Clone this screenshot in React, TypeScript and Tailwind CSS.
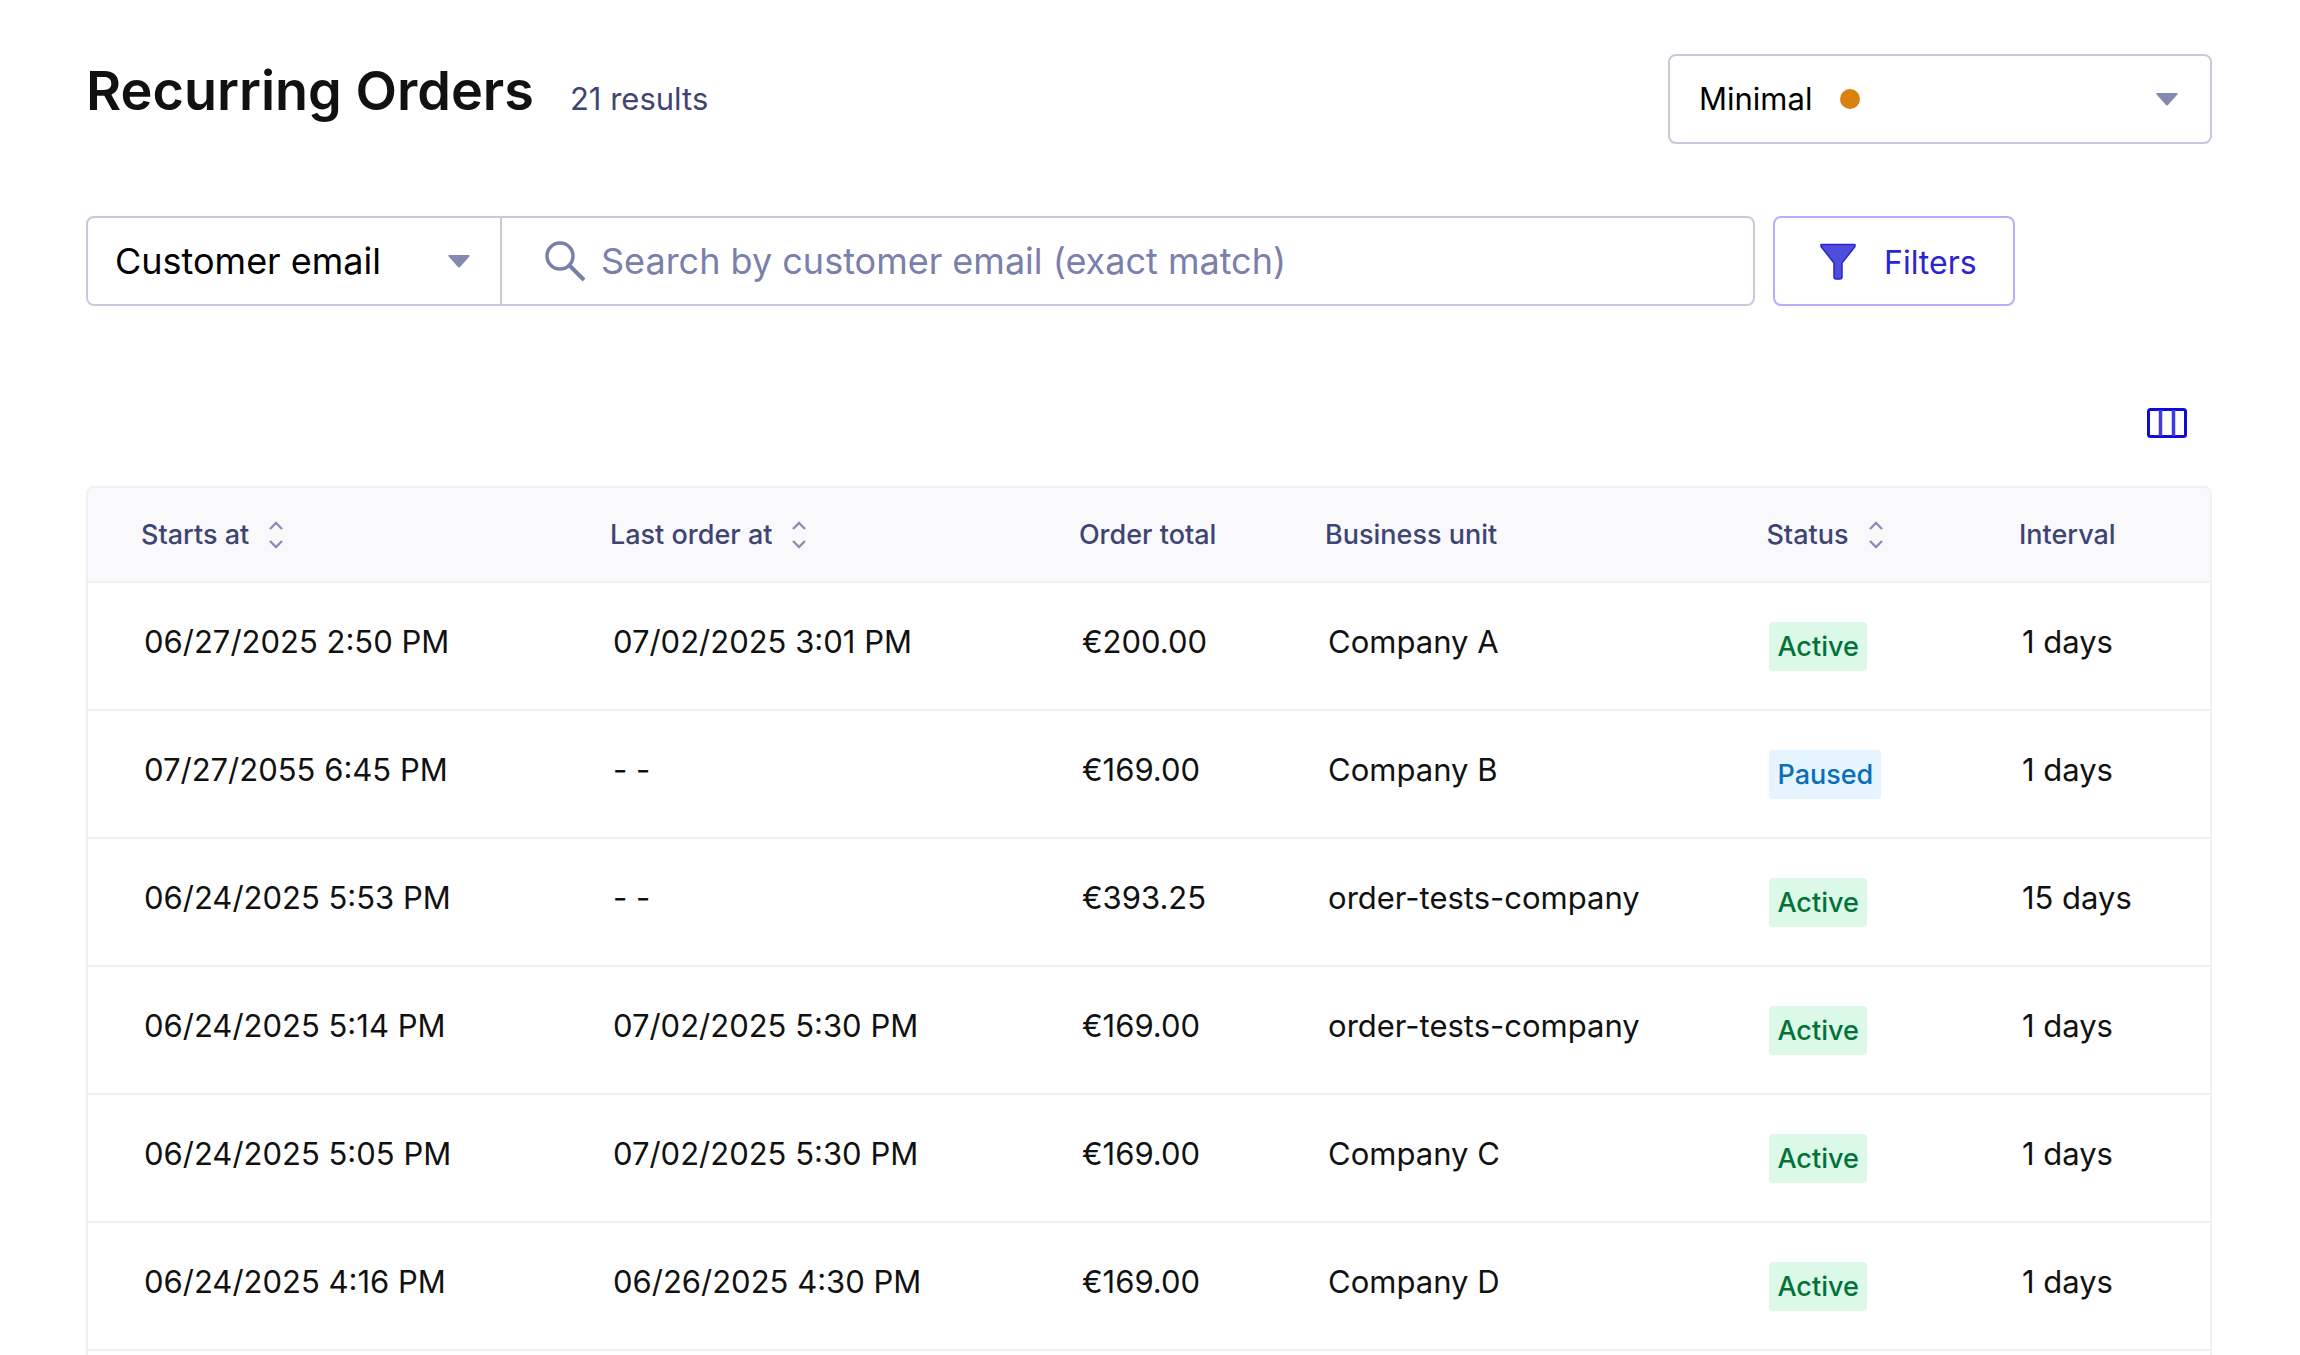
import { useState } from "react";

const columns = [
  { key: "startsAt", label: "Starts at", sortable: true, width: "w-[22.1%]" },
  { key: "lastOrderAt", label: "Last order at", sortable: true, width: "w-[22.1%]" },
  { key: "total", label: "Order total", sortable: false, width: "w-[11.6%]" },
  { key: "unit", label: "Business unit", sortable: false, width: "w-[20.8%]" },
  { key: "status", label: "Status", sortable: true, width: "w-[11.9%]" },
  { key: "interval", label: "Interval", sortable: false, width: "w-[11.5%]" },
];

const orders = [
  { startsAt: "06/27/2025 2:50 PM", lastOrderAt: "07/02/2025 3:01 PM", total: "€200.00", unit: "Company A", status: "Active", interval: "1 days" },
  { startsAt: "07/27/2055 6:45 PM", lastOrderAt: "- -", total: "€169.00", unit: "Company B", status: "Paused", interval: "1 days" },
  { startsAt: "06/24/2025 5:53 PM", lastOrderAt: "- -", total: "€393.25", unit: "order-tests-company", status: "Active", interval: "15 days" },
  { startsAt: "06/24/2025 5:14 PM", lastOrderAt: "07/02/2025 5:30 PM", total: "€169.00", unit: "order-tests-company", status: "Active", interval: "1 days" },
  { startsAt: "06/24/2025 5:05 PM", lastOrderAt: "07/02/2025 5:30 PM", total: "€169.00", unit: "Company C", status: "Active", interval: "1 days" },
  { startsAt: "06/24/2025 4:16 PM", lastOrderAt: "06/26/2025 4:30 PM", total: "€169.00", unit: "Company D", status: "Active", interval: "1 days" },
];

const Caret = () => (
  <svg width="22" height="13" viewBox="0 0 22 13" className="pointer-events-none shrink-0" aria-hidden="true">
    <path d="M1.2 0h19.600a.8.8 0 0 1 .6 1.400L11.800 12.200a1.100 1.100 0 0 1-1.600 0L.6 1.400A.8.8 0 0 1 1.200 0z" fill="#8489b0" />
  </svg>
);

const SortIcon = () => (
  <svg width="14" height="28" viewBox="0 0 14 28" fill="none" stroke="#8a8fb5" strokeWidth="2.400" aria-hidden="true">
    <path d="M1 8L7 2L13 8" />
    <path d="M1 20L7 26L13 20" />
  </svg>
);

const StatusBadge: React.FC<{ status: string }> = ({ status }) => (
  <span
    className={`inline-block rounded-sm px-2 text-[27px] leading-[49px] font-medium ${
      status === "Active" ? "bg-[#dbf9e6] text-[#00723b]" : "bg-[#e6f4ff] text-[#0a6fb8]"
    }`}
  >
    {status}
  </span>
);

const OrdersTable = () => (
  <div className="mt-12 overflow-hidden rounded-t-lg border-2 border-b-0 border-[#f0f0f6] pb-8">
    <table className="w-full table-fixed border-collapse text-left">
      <colgroup>
        {columns.map((col) => (
          <col key={col.key} className={col.width} />
        ))}
      </colgroup>
      <thead className="bg-[#f9f9fc]">
        <tr className="h-[94px] border-b-2 border-[#f0f0f6]">
          {columns.map((col) => (
            <th key={col.key} scope="col" className="pl-[53px] text-[27px] leading-9 font-medium whitespace-nowrap text-[#3f4572]">
              {col.sortable ? (
                <button type="button" className="flex items-center gap-5">
                  {col.label}
                  <SortIcon />
                </button>
              ) : (
                col.label
              )}
            </th>
          ))}
        </tr>
      </thead>
      <tbody>
        {orders.map((order) => (
          <tr key={order.startsAt} className="h-32 border-b-2 border-[#f0f0f6] text-[31px] leading-10 whitespace-nowrap text-[#111]">
            <td className="pb-2 pl-14">{order.startsAt}</td>
            <td className="pb-2 pl-14">{order.lastOrderAt}</td>
            <td className="pb-2 pl-14">{order.total}</td>
            <td className="pb-2 pl-14">{order.unit}</td>
            <td className="pl-14">
              <StatusBadge status={order.status} />
            </td>
            <td className="pb-2 pl-14">{order.interval}</td>
          </tr>
        ))}
      </tbody>
    </table>
  </div>
);

export default function App() {
  const [view, setView] = useState("Minimal");
  const [field, setField] = useState("Customer email");
  const [search, setSearch] = useState("");

  return (
    <main className="h-screen overflow-hidden bg-white pt-[54px] pr-[88px] pl-[86px] font-[Inter,sans-serif] text-black">
      <header className="flex items-start justify-between">
        <div className="flex items-baseline gap-9">
          <h1 className="text-[54px] leading-[74px] font-semibold text-[#111]">Recurring Orders</h1>
          <p className="text-[31px] text-[#3f4572]">21 results</p>
        </div>
        <div className="flex h-[90px] w-[544px] items-center rounded-lg border-2 border-[#c8cadc] pr-8">
          <div className="relative flex flex-1 items-center">
            <select
              aria-label="View"
              value={view}
              onChange={(e) => setView(e.target.value)}
              className="h-[86px] w-full appearance-none bg-transparent pl-[29px] text-[31px] outline-none"
            >
              <option>Minimal</option>
            </select>
            <span className="pointer-events-none absolute left-[170px] size-5 rounded-full bg-[#d9820f]" />
          </div>
          <Caret />
        </div>
      </header>

      <section className="mt-[72px] flex items-center gap-[18px]">
        <div className="flex h-[90px] w-full max-w-[1669px] rounded-lg border-2 border-[#c8cadc]">
          <div className="flex w-[414px] shrink-0 items-center border-r-2 border-[#c8cadc] pr-[30px]">
            <select
              aria-label="Search field"
              value={field}
              onChange={(e) => setField(e.target.value)}
              className="h-full flex-1 appearance-none bg-transparent pl-[27px] text-[36px] outline-none"
            >
              <option>Customer email</option>
            </select>
            <Caret />
          </div>
          <label className="flex flex-1 items-center gap-[15px] pl-[42px]">
            <svg width="42" height="42" viewBox="0 0 42 42" fill="none" stroke="#7a80aa" strokeWidth="3.500" aria-hidden="true">
              <circle cx="16" cy="16" r="13" />
              <path d="M25 25L40 40" strokeWidth="4" />
            </svg>
            <input
              type="text"
              aria-label="Search by customer email"
              placeholder="Search by customer email (exact match)"
              value={search}
              onChange={(e) => setSearch(e.target.value)}
              className="h-full min-w-0 flex-1 bg-transparent text-[36px] outline-none placeholder:text-[#7a80aa]"
            />
          </label>
        </div>
        <button type="button" className="flex h-[90px] shrink-0 items-center gap-7 rounded-lg border-2 border-[#b5b0fa] pr-9 pl-[45px] text-[32px] text-[#2a25d0]">
          <svg width="36" height="37" viewBox="0 0 36 37" aria-hidden="true">
            <path d="M1 1.500h34v2L22 20v14a2 2 0 0 1-2 2h-4a2 2 0 0 1-2-2V20L1 3.500z" fill="#4f4ddb" stroke="#2a25d6" strokeWidth="1.500" strokeLinejoin="round" />
          </svg>
          <span className="pt-1">Filters</span>
        </button>
      </section>

      <div className="mt-[102px] flex justify-end pr-[25px]">
        <button type="button" aria-label="Columns">
          <svg width="40" height="30" viewBox="0 0 40 30" fill="none" stroke="#100bd8" strokeWidth="3" className="block" aria-hidden="true">
            <rect x="1.500" y="1.500" width="37" height="27" rx="2" />
            <path d="M13.500 2v26M26.500 2v26" stroke="#3f3bdd" strokeWidth="3.500" />
          </svg>
        </button>
      </div>

      <OrdersTable />
    </main>
  );
}
